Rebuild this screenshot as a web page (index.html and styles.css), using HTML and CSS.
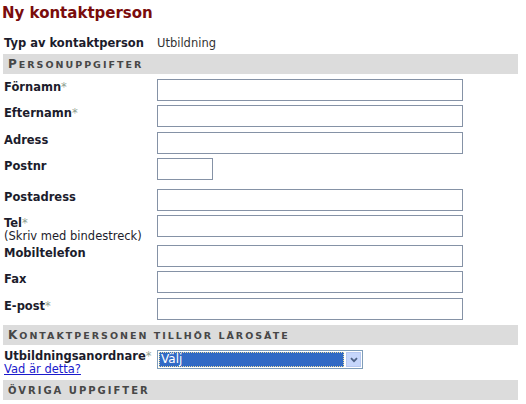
FILE: index.html
```html
<!DOCTYPE html>
<html lang="sv">
<head>
    <meta charset="UTF-8">
    <meta name="viewport" content="width=device-width, initial-scale=1.0">
    <title>Ny kontaktperson</title>
    <link rel="stylesheet" href="styles.css">
</head>
<body>
    <div class="page">
        <h1 class="title">Ny kontaktperson</h1>

        <div class="type-row">
            <span class="label">Typ av kontaktperson</span>
            <span class="type-value">Utbildning</span>
        </div>

        <h2 class="section">Personuppgifter</h2>

        <div class="form-row">
            <label class="label">Förnamn<span class="req">*</span></label>
            <input type="text" class="field">
        </div>
        <div class="form-row wide">
            <label class="label">Efternamn<span class="req">*</span></label>
            <input type="text" class="field">
        </div>
        <div class="form-row">
            <label class="label">Adress</label>
            <input type="text" class="field">
        </div>
        <div class="form-row extra">
            <label class="label">Postnr</label>
            <input type="text" class="field short">
        </div>
        <div class="form-row">
            <label class="label">Postadress</label>
            <input type="text" class="field">
        </div>
        <div class="form-row tall">
            <label class="label">Tel<span class="req">*</span><span class="hint">(Skriv med bindestreck)</span></label>
            <input type="text" class="field">
        </div>
        <div class="form-row">
            <label class="label">Mobiltelefon</label>
            <input type="text" class="field">
        </div>
        <div class="form-row wide">
            <label class="label">Fax</label>
            <input type="text" class="field">
        </div>
        <div class="form-row wide">
            <label class="label">E-post<span class="req">*</span></label>
            <input type="text" class="field">
        </div>

        <h2 class="section">Kontaktpersonen tillhör lärosäte</h2>

        <div class="select-row">
            <div class="label">
                Utbildningsanordnare<span class="req">*</span>
                <a href="#" class="help">Vad är detta?</a>
            </div>
            <div class="select">
                <span class="select-value">Välj</span>
                <span class="select-arrow">
                    <svg width="8" height="6" viewBox="0 0 8 6"><path d="M1 1.2 L4 4.2 L7 1.2" fill="none" stroke="#4d6185" stroke-width="1.8"/></svg>
                </span>
            </div>
        </div>

        <h2 class="section caps">Övriga uppgifter</h2>
    </div>
</body>
</html>
```

FILE: styles.css
```css
* {
    margin: 0;
    padding: 0;
    box-sizing: border-box;
}

body {
    font-family: "DejaVu Sans", Verdana, sans-serif;
    background: #fff;
    color: #1c1c2c;
}

.page {
    width: 518px;
    padding: 4px 0 0 3px;
}

.title {
    font-size: 15px;
    line-height: 18px;
    color: #7a0c0c;
    margin-left: -1px;
}

.type-row {
    display: flex;
    margin-top: 15px;
    font-size: 11.5px;
    line-height: 13px;
}

.type-value {
    font-size: 11.5px;
    color: #333;
}

.label {
    width: 154px;
    flex-shrink: 0;
    font-weight: bold;
    font-size: 11.5px;
    line-height: 13px;
    padding-left: 1px;
}

.req {
    color: #8fa08f;
    font-weight: normal;
}

.hint {
    display: block;
    font-weight: normal;
}

.section {
    height: 20px;
    line-height: 21px;
    margin: 4px 0 5px;
    padding-left: 5px;
    background: #dcdcdc;
    color: #474747;
    font-size: 9.5px;
    text-transform: uppercase;
    letter-spacing: 2px;
    white-space: nowrap;
}

.section::first-letter {
    font-size: 12px;
}

.section.caps {
    font-size: 10px;
    letter-spacing: 2px;
    margin-top: 4px;
}

.section.caps::first-letter {
    font-size: 10px;
}

.form-row {
    display: flex;
    align-items: flex-start;
    margin-bottom: 4px;
}

.form-row .label {
    padding-top: 2px;
}

.form-row.wide {
    margin-bottom: 5px;
}

.form-row.extra {
    margin-bottom: 9px;
}

.form-row.tall {
    margin-bottom: 2px;
}

.field {
    width: 306px;
    height: 22px;
    border: 1px solid #8592a6;
    background: #fff;
    font: inherit;
}

.field.short {
    width: 56px;
}

.select-row {
    display: flex;
    align-items: flex-start;
    margin-top: -2px;
}

.select-row .label {
    padding-top: 2px;
}

.help {
    display: block;
    font-weight: normal;
    color: #1a1acc;
}

.select {
    display: flex;
    width: 206px;
    height: 19px;
    margin-top: 2px;
    padding: 1px;
    border: 1px solid #7f9db9;
    background: #fff;
}

.select-value {
    flex: 1;
    background: #316ac5;
    color: #fff;
    font-size: 12px;
    line-height: 15px;
    padding-left: 2px;
    outline: 1px dotted #e8dca0;
    outline-offset: -1px;
}

.select-arrow {
    width: 15px;
    margin-left: 2px;
    display: flex;
    align-items: center;
    justify-content: center;
    background: #c6d6fb;
    border: 1px solid #b7c8f0;
}
```
